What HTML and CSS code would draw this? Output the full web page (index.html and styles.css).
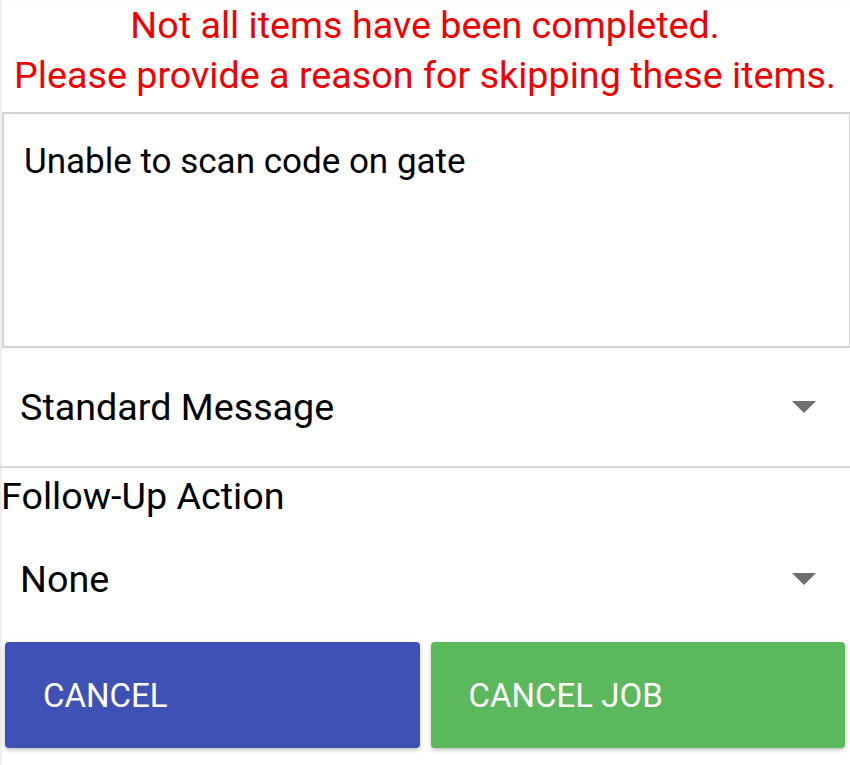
FILE: index.html
```html
<!DOCTYPE html>
<html lang="en">
<head>
  <meta charset="UTF-8">
  <meta name="viewport" content="width=device-width, initial-scale=1.0">
  <title>Skip reason</title>
  <link rel="stylesheet" href="styles.css">
</head>
<body>
<div class="screen">
  <div class="warning">
    <div>Not all items have been completed.</div>
    <div>Please provide a reason for skipping these items.</div>
  </div>

  <div class="reason-box">Unable to scan code on gate</div>

  <div class="picker picker-underlined">
    <span>Standard Message</span>
    <span class="arrow"></span>
  </div>

  <div class="field-label">Follow-Up Action</div>

  <div class="picker picker-short">
    <span>None</span>
    <span class="arrow"></span>
  </div>

  <div class="actions">
    <button class="btn btn-cancel">CANCEL</button>
    <button class="btn btn-cancel-job">CANCEL JOB</button>
  </div>
</div>
</body>
</html>
```

FILE: styles.css
```css
body {
    margin: 0;
    background-color: #ffffff;
    font-family: Roboto, "Noto Sans", sans-serif;
    color: #000;
}

.screen {
    width: 850px;
    height: 765px;
    background: #fff;
    box-shadow: inset 3px 0 3px -2px rgba(0, 0, 0, 0.12);
}

.warning {
    color: #f20000;
    text-align: center;
    font-size: 37.7px;
    line-height: 50px;
    white-space: nowrap;
}

.reason-box {
    margin-top: 12px;
    margin-left: 2px;
    border: 2px solid #d2d2d8;
    border-right-width: 1px;
    padding: 27px 0 0 20px;
    box-sizing: border-box;
    height: 236px;
    font-size: 35px;
}

.picker {
    display: flex;
    align-items: center;
    justify-content: space-between;
    height: 118px;
    padding: 0 34px 0 20px;
    font-size: 37.7px;
}

.picker-underlined {
    border-bottom: 2px solid #d6d6da;
}

.picker-short {
    height: 110px;
}

.arrow {
    width: 0;
    height: 0;
    border-left: 12px solid transparent;
    border-right: 12px solid transparent;
    border-top: 12px solid #6f6f6f;
}

.field-label {
    font-size: 37.7px;
    line-height: 56px;
    padding-left: 1px;
}

.actions {
    display: flex;
    gap: 11px;
    padding: 8px 5px 0 5px;
}

.btn {
    flex: 1;
    height: 106px;
    border: none;
    border-radius: 4px;
    color: #fff;
    font-family: Roboto, sans-serif;
    font-size: 33px;
    text-align: left;
    padding-left: 38px;
    box-shadow: 0 2px 4px rgba(0, 0, 0, 0.25);
}

.btn-cancel {
    background-color: #3f51b5;
}

.btn-cancel-job {
    background-color: #5cb85c;
}
```
